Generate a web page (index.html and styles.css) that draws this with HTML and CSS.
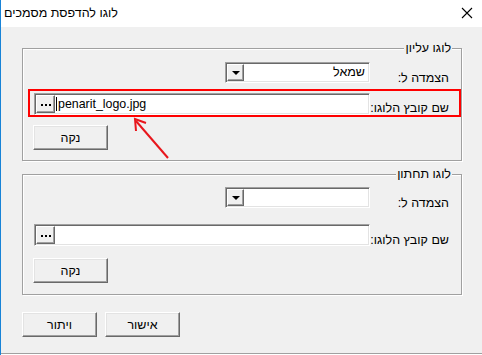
FILE: index.html
```html
<!DOCTYPE html>
<html lang="he">
<head>
    <meta charset="UTF-8">
    <title>לוגו להדפסת מסמכים</title>
    <link rel="stylesheet" href="styles.css">
</head>
<body>
<div class="window">
    <!-- Title bar -->
    <div class="titlebar">
        <span class="caption" dir="rtl">לוגו להדפסת מסמכים</span>
        <svg class="close" width="12" height="12" viewBox="0 0 12 12">
            <path d="M1 1 L11 11 M11 1 L1 11" stroke="#000" stroke-width="1.1" fill="none"/>
        </svg>
    </div>

    <div class="client" dir="rtl">
        <!-- לוגו עליון -->
        <div class="group group-top">
            <span class="legend">לוגו עליון</span>
            <div class="row">
                <div class="label">הצמדה ל:</div>
                <div class="combo">
                    <div class="combo-text">שמאל</div>
                    <div class="combo-btn"><span class="tri"></span></div>
                </div>
            </div>
            <div class="highlight">
                <div class="row">
                    <div class="label">שם קובץ הלוגו:</div>
                    <div class="field">
                        <div class="field-text" dir="ltr"><span class="caret"></span>penarit_logo.jpg</div>
                        <div class="dots"><span class="dot"></span></div>
                    </div>
                </div>
            </div>
            <div class="btn btn-clear">נקה</div>
        </div>

        <!-- לוגו תחתון -->
        <div class="group group-bottom">
            <span class="legend">לוגו תחתון</span>
            <div class="row">
                <div class="label">הצמדה ל:</div>
                <div class="combo">
                    <div class="combo-text"></div>
                    <div class="combo-btn"><span class="tri"></span></div>
                </div>
            </div>
            <div class="row row-file">
                <div class="label">שם קובץ הלוגו:</div>
                <div class="field">
                    <div class="field-text" dir="ltr"></div>
                    <div class="dots"><span class="dot"></span></div>
                </div>
            </div>
            <div class="btn btn-clear">נקה</div>
        </div>

        <div class="actions">
            <div class="btn">אישור</div>
            <div class="btn">ויתור</div>
        </div>
    </div>

    <!-- annotation arrow -->
    <svg class="arrow" width="60" height="60" viewBox="0 0 60 60">
        <path d="M44 47 L12 10" stroke="#e8161c" stroke-width="2" fill="none"/>
        <path d="M12 20 L11 8 L22 12" stroke="#e8161c" stroke-width="2" fill="none"/>
    </svg>
</div>
</body>
</html>
```

FILE: styles.css
```css
* {
    box-sizing: border-box;
    margin: 0;
    padding: 0;
}
body {
    font-family: 'Liberation Sans', Arial, sans-serif;
    font-size: 12px;
    color: #000;
    background-color: #ffffff;
}
.window {
    position: relative;
    width: 482px;
    height: 355px;
    border-left: 1px solid #1883d7;
    background-color: #ffffff;
}

/* Title bar */
.titlebar {
    height: 27px;
    display: flex;
    align-items: center;
    justify-content: space-between;
    padding: 0 8px 1px 3px;
    background-color: #ffffff;
}
.caption {
    font-size: 12.5px;
}
.close {
    margin-right: 1px;
}

/* Client area */
.client {
    height: 327px;
    background-color: #f0f0f0;
    border-bottom: 1px solid #a0a0a0;
    padding: 21px 20px 0 21px;
}

/* Group boxes */
.group {
    position: relative;
    border: 1px solid #a0a0a0;
    box-shadow: inset 1px 1px #ffffff, 1px 1px #ffffff;
    padding: 13px 12px 0 10px;
}
.group-top {
    height: 113px;
}
.group-bottom {
    height: 121px;
    margin-top: 13px;
    padding-top: 12px;
}
.legend {
    position: absolute;
    top: -8px;
    right: 9px;
    padding: 0 1px;
    line-height: 14px;
    font-size: 12.5px;
    background-color: #f0f0f0;
}

/* Rows */
.row {
    display: flex;
    align-items: center;
    height: 21px;
}
.row-file {
    height: 22px;
    margin-top: 16px;
}
.label {
    width: 79px;
    flex-shrink: 0;
    margin-top: 10px;
    font-size: 12.5px;
    text-align: right;
    white-space: nowrap;
}

/* Sunken controls */
.combo, .field {
    display: flex;
    height: 100%;
    background-color: #ffffff;
    border-top: 1px solid #a0a0a0;
    border-right: 1px solid #ffffff;
    border-bottom: 1px solid #ffffff;
    border-left: 1px solid #a0a0a0;
    box-shadow: inset 1px 1px #696969, inset -1px -1px #e3e3e3;
    padding: 1px;
}
.combo {
    width: 145px;
}
.combo-text {
    flex: 1;
    padding: 0 3px 0 0;
    line-height: 17px;
    font-size: 12.5px;
}
.combo-btn {
    width: 17px;
    display: flex;
    align-items: center;
    justify-content: center;
    background-color: #f0f0f0;
    border-top: 1px solid #ffffff;
    border-left: 1px solid #ffffff;
    border-right: 1px solid #696969;
    border-bottom: 1px solid #696969;
    box-shadow: inset -1px -1px #a0a0a0;
}
.tri {
    width: 0;
    height: 0;
    border-left: 4px solid transparent;
    border-right: 4px solid transparent;
    border-top: 4px solid #000;
}
.field {
    width: 336px;
}
.field-text {
    flex: 1;
    display: flex;
    align-items: center;
    padding-left: 1px;
    font-size: 12.4px;
    overflow: hidden;
    white-space: nowrap;
}
.caret {
    width: 1px;
    height: 14px;
    background-color: #000;
    margin-right: 1px;
}
.dots {
    width: 19px;
    display: flex;
    align-items: center;
    justify-content: center;
    background-color: #f0f0f0;
    border-top: 1px solid #ffffff;
    border-left: 1px solid #ffffff;
    border-right: 1px solid #696969;
    border-bottom: 1px solid #696969;
    box-shadow: inset -1px -1px #a0a0a0;
}
.dot {
    width: 2px;
    height: 2px;
    margin-top: 1px;
    background-color: #000;
    box-shadow: -4px 0 #000, 4px 0 #000;
}

/* Red annotation frame */
.highlight {
    height: 28px;
    margin: 6px -12px 0 -5px;
    padding: 2px 10px 0 3px;
    border: 2px solid #ff0000;
}
.highlight .row {
    height: 22px;
}
.highlight .label {
    margin-top: 8px;
}

/* Buttons */
.btn {
    width: 75px;
    height: 25px;
    display: flex;
    align-items: center;
    justify-content: center;
    font-size: 12.5px;
    background-color: #f0f0f0;
    border-top: 1px solid #ffffff;
    border-right: 1px solid #696969;
    border-bottom: 1px solid #696969;
    border-left: 1px solid #ffffff;
    box-shadow: inset -1px -1px #a0a0a0, inset 1px 1px #e3e3e3;
}
.btn-clear {
    margin-top: 8px;
    margin-right: auto;
}
.group-bottom .btn-clear {
    margin-top: 12px;
}
.actions {
    display: flex;
    justify-content: flex-end;
    gap: 8px;
    margin-top: 17px;
}

/* Arrow over the dialog */
.arrow {
    position: absolute;
    left: 123px;
    top: 111px;
}
```
